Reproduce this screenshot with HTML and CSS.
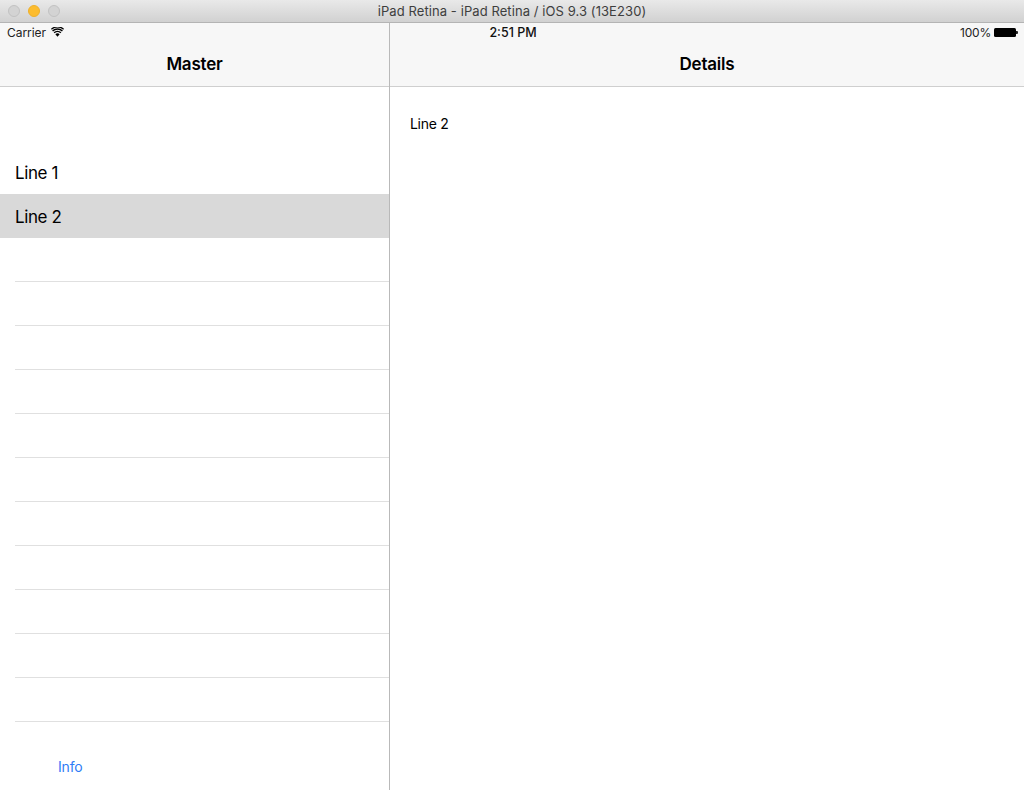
FILE: index.html
```html
<!DOCTYPE html>
<html lang="en">
<head>
<meta charset="utf-8">
<title>iPad Retina</title>
<link rel="stylesheet" href="styles.css">
</head>
<body>
<div class="window">
  <header class="titlebar">
    <div class="lights">
      <span class="light"></span>
      <span class="light light-min"></span>
      <span class="light"></span>
    </div>
    <div class="window-title">iPad Retina - iPad Retina / iOS 9.3 (13E230)</div>
  </header>
  <div class="screen">
    <div class="status">
      <div class="status-left">
        <span>Carrier</span>
        <svg class="wifi" width="13" height="10" viewBox="0 0 14 10" aria-hidden="true">
          <path d="M7 10 L4.7 7.4 A3.4 3.4 0 0 1 9.3 7.4 Z" fill="#000"/>
          <path d="M3.4 5.9 A5.2 5.2 0 0 1 10.6 5.9" fill="none" stroke="#000" stroke-width="1.5"/>
          <path d="M1.7 3.9 A7.8 7.8 0 0 1 12.3 3.9" fill="none" stroke="#000" stroke-width="1.5"/>
          <path d="M0.4 2 A9.8 9.8 0 0 1 13.6 2" fill="none" stroke="#000" stroke-width="1.3"/>
        </svg>
      </div>
      <span class="time">2:51 PM</span>
      <div class="status-right">
        <span>100%</span>
        <span class="battery"><span class="battery-cap"></span></span>
      </div>
    </div>
    <aside class="master">
      <div class="nav">
        <div class="nav-title">Master</div>
      </div>
      <ul class="list">
        <li class="row row-plain">Line 1</li>
        <li class="row row-selected">Line 2</li>
        <li class="row"></li>
        <li class="row"></li>
        <li class="row"></li>
        <li class="row"></li>
        <li class="row"></li>
        <li class="row"></li>
        <li class="row"></li>
        <li class="row"></li>
        <li class="row"></li>
        <li class="row"></li>
        <li class="row"></li>
      </ul>
      <div class="info">Info</div>
    </aside>
    <main class="detail">
      <div class="nav">
        <div class="nav-title">Details</div>
      </div>
      <p class="detail-text">Line 2</p>
    </main>
  </div>
</div>
</body>
</html>
```
FILE: styles.css
```css
* { box-sizing: border-box; }
html, body { margin: 0; padding: 0; background: #fff; }
body { font-family: Inter, "Liberation Sans", sans-serif; color: #000; }
.window { width: 1024px; height: 790px; display: flex; flex-direction: column; overflow: hidden; }
.titlebar {
  height: 23px; flex: none; display: flex; align-items: center; position: relative;
  background: linear-gradient(#e9e9e9, #d1d1d1);
  border-bottom: 1px solid #b4b4b4;
}
.lights { display: flex; gap: 8px; padding-left: 8px; }
.light { width: 12px; height: 12px; border-radius: 50%; background: #d3d3d3; border: 1px solid #c2c2c2; }
.light-min { background: #fcbc2e; border-color: #eeb02a; }
.window-title {
  position: absolute; left: 0; right: 0; top: 0; height: 22px; line-height: 23px;
  text-align: center; font-size: 13px; letter-spacing: 0.08px; color: #3e3e3e;
}
.screen { flex: 1; display: flex; min-height: 0; position: relative; }
.status {
  position: absolute; left: 0; right: 0; top: 0; height: 19px; padding: 0 5px 0 7px;
  display: grid; grid-template-columns: 1fr auto 1fr; align-items: center;
  font-size: 12px; color: #222;
}
.status-left { display: flex; align-items: center; gap: 5px; letter-spacing: -0.05px; }
.wifi { margin-top: -1px; }
.time { font-weight: 500; font-size: 12.5px; color: #111; }
.status-right { display: flex; align-items: center; justify-content: flex-end; gap: 3px; padding-right: 1px; letter-spacing: -0.2px; }
.battery { width: 22px; height: 9px; background: #000; border-radius: 1.5px; position: relative; margin-right: 2px; }
.battery-cap { position: absolute; right: -2px; top: 3px; width: 2px; height: 3px; background: #222; border-radius: 0 1px 1px 0; }
.master { width: 390px; flex: none; border-right: 1px solid #b9b9b9; display: flex; flex-direction: column; }
.detail { flex: 1; min-width: 0; }
.nav { height: 64px; padding: 20px 0 1px; background: #f7f7f7; border-bottom: 1px solid #cfcfcf; display: flex; }
.nav-title { flex: 1; display: flex; align-items: center; justify-content: center; font-size: 17px; font-weight: 600; letter-spacing: -0.2px; }
.list { list-style: none; margin: 0; padding: 63px 0 0; flex: none; }
.row { height: 44px; margin-left: 15px; border-bottom: 1px solid #e0e0e0; }
.row-plain, .row-selected { display: flex; align-items: center; padding-top: 1px; font-size: 17px; letter-spacing: -0.4px; border-bottom: 0; }
.row-selected { margin-left: 0; padding-left: 15px; background: #d9d9d9; }
.info { padding: 35px 0 0 58px; font-size: 14px; letter-spacing: -0.15px; line-height: 20px; color: #2f7cf6; }
.detail-text { margin: 0; padding: 27px 0 0 20px; font-size: 14px; letter-spacing: -0.3px; line-height: 20px; color: #000; }
```
